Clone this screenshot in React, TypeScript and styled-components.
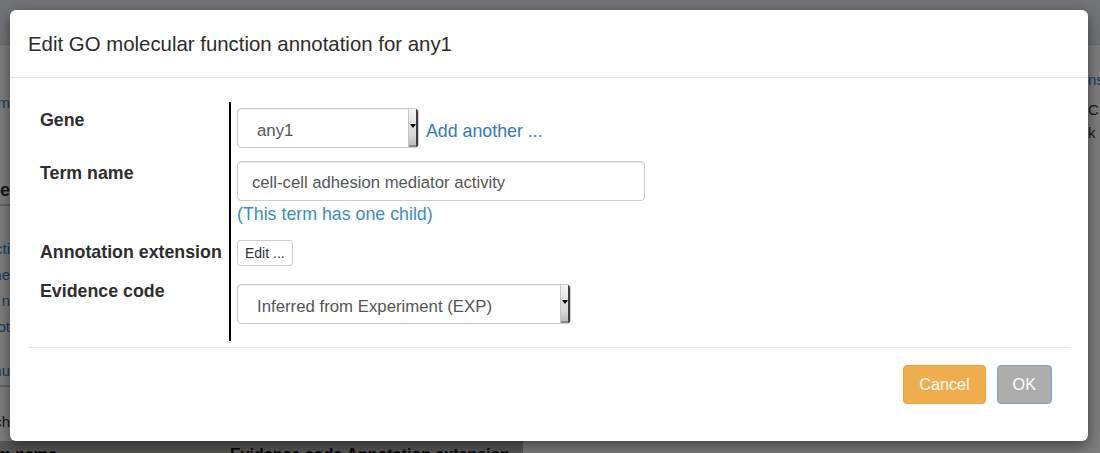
import React from "react";
import styled, { createGlobalStyle } from "styled-components";

const Global = createGlobalStyle`
  html, body { margin: 0; padding: 0; }
  body {
    font-family: "Liberation Sans", Arial, Helvetica, sans-serif;
    color: #333;
    background: #fff;
  }
  * { box-sizing: border-box; }
`;

const Page = styled.div`
  position: relative;
  width: 1100px;
  height: 453px;
  overflow: hidden;
  background: #fff;
  display: flex;
  flex-direction: column;
`;

const Navbar = styled.div`
  flex: none;
  height: 45px;
  background: #e7e8ee;
  border-bottom: 1px solid #cfd0d6;
`;

const Content = styled.div`
  flex: 1;
  display: flex;
  justify-content: space-between;
`;

const Edge = styled.div<{ $w: number }>`
  width: ${(p) => p.$w}px;
  overflow: hidden;
  display: flex;
  flex-direction: column;
`;

const Clip = styled.div<{
  $top: number;
  $lh?: number;
  $bold?: boolean;
  $link?: boolean;
  $rule?: boolean;
  $end?: boolean;
}>`
  display: flex;
  justify-content: ${(p) => (p.$end ? "flex-end" : "flex-start")};
  white-space: nowrap;
  margin-top: ${(p) => p.$top}px;
  line-height: ${(p) => p.$lh ?? 20}px;
  font-size: ${(p) => (p.$bold ? 18 : 15)}px;
  font-weight: ${(p) => (p.$bold ? 700 : 400)};
  color: ${(p) => (p.$link ? "#337ab7" : "#333")};
  ${(p) => (p.$rule ? "border-bottom: 2px solid #c8c8c8; padding-bottom: 4px;" : "")}
`;

const TableHead = styled.div`
  flex: none;
  height: 12px;
  display: flex;
`;

const HeadBand = styled.div`
  width: 523px;
  display: flex;
  background: #b0b0ac;
  padding-top: 4px;
  font-size: 16px;
  font-weight: 700;
  line-height: 20px;
  color: #111;
`;

const HeadCell = styled.div<{ $w?: number; $ml?: number; $end?: boolean }>`
  ${(p) => (p.$w ? `width: ${p.$w}px;` : "")}
  margin-left: ${(p) => p.$ml ?? 0}px;
  overflow: hidden;
  white-space: nowrap;
  display: flex;
  justify-content: ${(p) => (p.$end ? "flex-end" : "flex-start")};
`;

const Backdrop = styled.div`
  position: absolute;
  inset: 0;
  background: rgba(0, 0, 0, 0.5);
`;

const Modal = styled.div`
  position: absolute;
  top: 10px;
  left: 10px;
  width: 1078px;
  background: #fff;
  border-radius: 6px;
  box-shadow: 0 5px 15px rgba(0, 0, 0, 0.5);
  display: flex;
  flex-direction: column;
`;

const Header = styled.div`
  padding: 21px 18px 20px;
  border-bottom: 1px solid #e5e5e5;
`;

const Title = styled.h4`
  margin: 0;
  font-size: 20.4px;
  line-height: 26px;
  font-weight: 400;
  color: #2b2b2b;
`;

const Body = styled.div`
  padding: 24px 18px 0;
`;

const FormGrid = styled.div`
  display: grid;
  grid-template-columns: 201px 1fr;
`;

const Label = styled.div`
  padding: 6px 0 7px 12px;
  font-size: 17.8px;
  line-height: 24px;
  font-weight: 700;
  color: #2e2e2e;
  white-space: nowrap;
`;

const Value = styled.div`
  border-left: 2px solid #000;
  padding: 6px 0 7px 6px;
  display: flex;
  flex-direction: column;
  align-items: flex-start;
`;

const InlineRow = styled.div`
  display: flex;
  align-items: center;
  gap: 7px;
`;

const Select = styled.div<{ $w: number; $my?: number; $mb?: number }>`
  width: ${(p) => p.$w}px;
  height: 40px;
  margin-top: ${(p) => p.$my ?? 0}px;
  margin-bottom: ${(p) => p.$mb ?? 0}px;
  display: flex;
  align-items: stretch;
  border: 1px solid #ccc;
  border-radius: 4px;
  background: #fff;
  overflow: hidden;
  box-shadow: inset 0 1px 1px rgba(0, 0, 0, 0.075);
`;

const SelectText = styled.span`
  flex: 1;
  display: flex;
  align-items: center;
  padding: 6px 0 0 19px;
  font-size: 16.8px;
  color: #555;
  white-space: nowrap;
`;

const DropButton = styled.span`
  width: 10px;
  flex: none;
  display: flex;
  align-items: center;
  justify-content: center;
  padding-bottom: 4px;
  background: linear-gradient(#f2f2f2, #d6d6d6 70%, #b8b8b8);
  border-left: 1px solid #c4c4c4;
  box-shadow: inset -2px 0 0 #3c3c3c, inset 0 -2px 0 #8a8a8a;
`;

const Caret = styled.span`
  width: 0;
  height: 0;
  margin-right: 2px;
  border-left: 3px solid transparent;
  border-right: 3px solid transparent;
  border-top: 4px solid #000;
`;

const AddLink = styled.a`
  padding-top: 5px;
  font-size: 17.8px;
  line-height: 26px;
  color: #337ab7;
  text-decoration: none;
  white-space: nowrap;
`;

const TextInput = styled.div`
  width: 408px;
  height: 40px;
  display: flex;
  align-items: center;
  padding: 4px 14px 0;
  border: 1px solid #ccc;
  border-radius: 4px;
  background: #fff;
  box-shadow: inset 0 1px 1px rgba(0, 0, 0, 0.075);
  font-size: 16.7px;
  color: #555;
  white-space: nowrap;
`;

const Hint = styled.div`
  font-size: 17.8px;
  line-height: 26px;
  color: #3a8dbf;
  white-space: nowrap;
`;

const SmallButton = styled.button`
  height: 26px;
  padding: 0 7px;
  border: 1px solid #ccc;
  border-radius: 3px;
  background: #fff;
  font-family: inherit;
  font-size: 14px;
  color: #333;
`;

const Rule = styled.div`
  margin-top: 6px;
  height: 1px;
  background: #e5e5e5;
`;

const Footer = styled.div`
  display: flex;
  justify-content: flex-end;
  gap: 11px;
  padding: 17px 36px 37px;
`;

const ActionButton = styled.button<{ $kind: "warning" | "muted" }>`
  height: 39px;
  padding: 0 15px;
  border-radius: 4px;
  font-family: inherit;
  font-size: 16.2px;
  color: #fff;
  background: ${(p) => (p.$kind === "warning" ? "#f0ad4e" : "#adadad")};
  border: 1px solid ${(p) => (p.$kind === "warning" ? "#eea236" : "#85a2c6")};
`;

export default function App() {
  return (
    <>
      <Global />
      <Page>
        <Navbar />
        <Content>
          <Edge $w={10}>
            <Clip $top={48} $link $end>Term</Clip>
            <Clip $top={67} $bold $rule $end>Gene</Clip>
            <Clip $top={30} $lh={26} $link $end>Functi</Clip>
            <Clip $top={0} $lh={26} $link $end>Process one</Clip>
            <Clip $top={0} $lh={26} $link $end>Component n</Clip>
            <Clip $top={0} $lh={26} $link $end>Phenot</Clip>
            <Clip $top={21} $link $rule $end>Menu</Clip>
            <Clip $top={25} $end>Search</Clip>
          </Edge>
          <Edge $w={12}>
            <Clip $top={25} $link>ns</Clip>
            <Clip $top={10}>C</Clip>
            <Clip $top={3}>k</Clip>
          </Edge>
        </Content>
        <TableHead>
          <HeadBand>
            <HeadCell $w={57} $end>Term name</HeadCell>
            <HeadCell $ml={173}>Evidence code&nbsp;Annotation extension</HeadCell>
          </HeadBand>
        </TableHead>
        <Backdrop />
        <Modal>
          <Header>
            <Title>Edit GO molecular function annotation for any1</Title>
          </Header>
          <Body>
            <FormGrid>
              <Label>Gene</Label>
              <Value>
                <InlineRow>
                  <Select $w={182}>
                    <SelectText>any1</SelectText>
                    <DropButton>
                      <Caret />
                    </DropButton>
                  </Select>
                  <AddLink href="#">Add another ...</AddLink>
                </InlineRow>
              </Value>

              <Label>Term name</Label>
              <Value>
                <TextInput>cell-cell adhesion mediator activity</TextInput>
                <Hint>(This term has one child)</Hint>
              </Value>

              <Label>Annotation extension</Label>
              <Value>
                <SmallButton>Edit ...</SmallButton>
              </Value>

              <Label>Evidence code</Label>
              <Value>
                <Select $w={334} $my={5} $mb={10}>
                  <SelectText>Inferred from Experiment (EXP)</SelectText>
                  <DropButton>
                    <Caret />
                  </DropButton>
                </Select>
              </Value>
            </FormGrid>
            <Rule />
          </Body>
          <Footer>
            <ActionButton $kind="warning">Cancel</ActionButton>
            <ActionButton $kind="muted">OK</ActionButton>
          </Footer>
        </Modal>
      </Page>
    </>
  );
}
